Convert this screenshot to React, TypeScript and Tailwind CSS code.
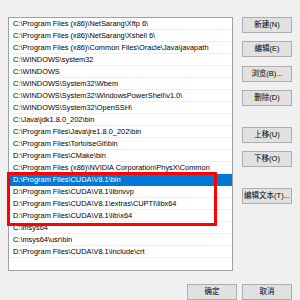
const rows = [
  "C:\\Program Files (x86)\\NetSarang\\Xftp 6\\",
  "C:\\Program Files (x86)\\NetSarang\\Xshell 6\\",
  "C:\\Program Files (x86)\\Common Files\\Oracle\\Java\\javapath",
  "C:\\WINDOWS\\system32",
  "C:\\WINDOWS",
  "C:\\WINDOWS\\System32\\Wbem",
  "C:\\WINDOWS\\System32\\WindowsPowerShell\\v1.0\\",
  "C:\\WINDOWS\\System32\\OpenSSH\\",
  "C:\\Java\\jdk1.8.0_202\\bin",
  "C:\\Program Files\\Java\\jre1.8.0_202\\bin",
  "C:\\Program Files\\TortoiseGit\\bin",
  "D:\\Program Files\\CMake\\bin",
  "C:\\Program Files (x86)\\NVIDIA Corporation\\PhysX\\Common",
  "D:\\Program Files\\CUDA\\V8.1\\bin",
  "D:\\Program Files\\CUDA\\V8.1\\libnvvp",
  "D:\\Program Files\\CUDA\\V8.1\\extras\\CUPTI\\libx64",
  "D:\\Program Files\\CUDA\\V8.1\\lib\\x64",
  "C:\\msys64",
  "C:\\msys64\\usr\\bin",
  "D:\\Program Files\\CUDA\\V8.1\\include\\crt",
];

const selected = 13;

function Btn({ label, className = "" }: { label: string; className?: string }) {
  return (
    <div
      className={`flex h-[16px] w-[50px] items-center justify-center border border-[#adadad] bg-[#e1e1e1] text-[7.5px] text-black ${className}`}
    >
      {label}
    </div>
  );
}

export default function App() {
  return (
    <div
      className="relative h-[300px] w-[300px] overflow-hidden bg-[#f0f0f0]"
      style={{ fontFamily: '"Liberation Sans", "Noto Sans CJK SC", sans-serif' }}
    >
      <div className="flex pt-[17px] pl-[8px]">
        <div className="relative h-[254px] w-[225px] border border-[#a0a0a0] bg-white">
          {rows.map((r, i) => (
            <div
              key={i}
              className={`flex h-[12px] items-center border-b pl-[4px] text-[7.4px] leading-none whitespace-nowrap ${
                i === selected
                  ? "border-[#0078d7] bg-[#0078d7] text-white"
                  : "border-[#f0f0f0] text-black"
              }`}
            >
              {r}
            </div>
          ))}
          <div className="absolute top-[154px] left-[-2px] h-[54px] w-[210px] border-[3px] border-[#ff0000]" />
        </div>
        <div className="ml-[9px] flex flex-col">
          <Btn label="新建(N)" />
          <Btn label="编辑(E)" className="mt-[8px]" />
          <Btn label="浏览(B)..." className="mt-[9px]" />
          <Btn label="删除(D)" className="mt-[8px]" />
          <Btn label="上移(U)" className="mt-[21px]" />
          <Btn label="下移(O)" className="mt-[8px]" />
          <Btn label="编辑文本(T)..." className="mt-[21px]" />
        </div>
      </div>
      <div className="mt-[13px] flex justify-end gap-[5px] pr-[8px]">
        <Btn label="确定" className="border-[#0078d7]" />
        <Btn label="取消" />
      </div>
    </div>
  );
}
